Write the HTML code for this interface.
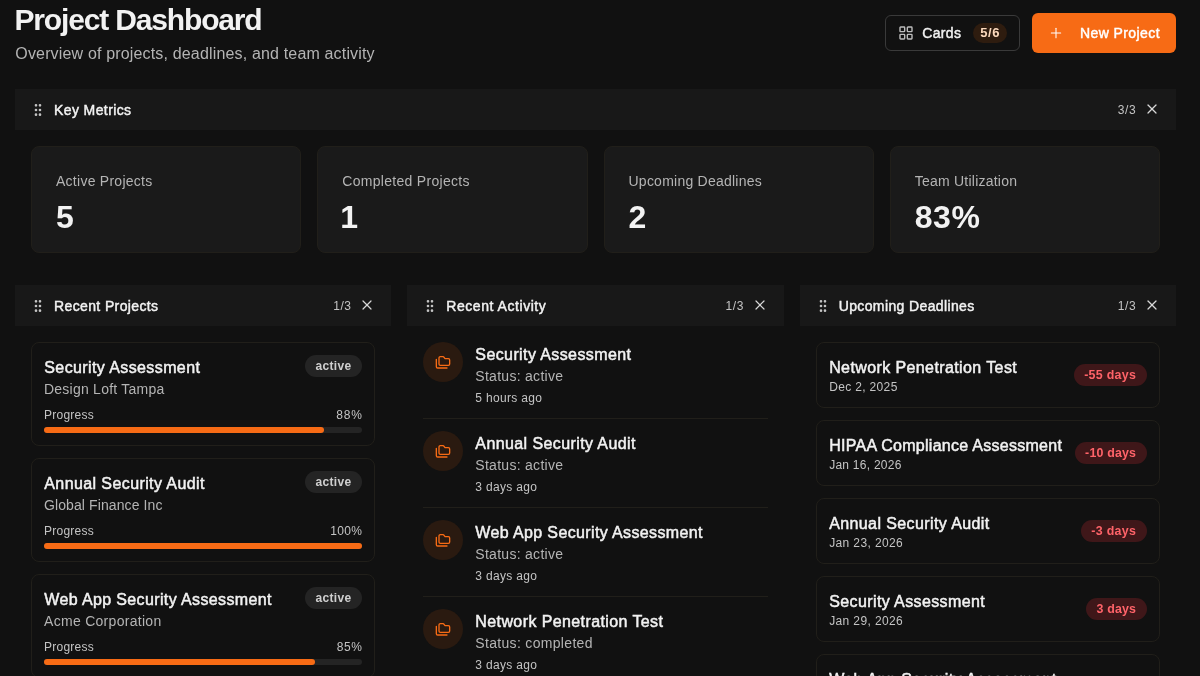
<!DOCTYPE html><html lang="en"><head><meta charset="utf-8"><title>Project Dashboard</title><style>
html,body{margin:0;padding:0}
html{width:1200px;height:676px;overflow:hidden;background:#111111}
body{background:#111111;width:1200px;height:676px;overflow:hidden;position:relative;font-family:"Liberation Sans",sans-serif;color:#f2f2f2}
.b{position:absolute;display:block}
.t{position:absolute;white-space:nowrap;margin:0}
#app{position:absolute;left:0;top:0;width:1200px;height:676px;overflow:hidden;will-change:transform}
</style></head><body><div id="app">
<div class="b" style="left:885px;top:15px;width:135px;height:36px;border:1px solid #3a3a3a;border-radius:6px;box-sizing:border-box;"></div>
<svg class="b" style="left:898px;top:25px" width="16" height="16" viewBox="0 0 24 24" fill="none" stroke="#bdbdbd" stroke-width="2.1" stroke-linecap="round" stroke-linejoin="round"><rect x="3" y="3" width="7" height="7" rx="1"/><rect x="14" y="3" width="7" height="7" rx="1"/><rect x="14" y="14" width="7" height="7" rx="1"/><rect x="3" y="14" width="7" height="7" rx="1"/></svg>
<div class="b" style="left:973px;top:23px;width:34px;height:20px;background:#2e1c0f;border-radius:10px;"></div>
<div class="b" style="left:1032px;top:13px;width:144px;height:40px;background:#f76b15;border-radius:6px;"></div>
<svg class="b" style="left:1048px;top:25px" width="16" height="16" viewBox="0 0 24 24" fill="none" stroke="#ffffff" stroke-width="1.6" stroke-linecap="round" stroke-linejoin="round"><path d="M5 12h14"/><path d="M12 5v14"/></svg>
<div class="b" style="left:15px;top:89px;width:1161px;height:41px;background:#181818;"></div>
<svg class="b" style="left:30px;top:102px" width="16" height="16" viewBox="0 0 24 24" fill="none" stroke="#c4c4c4" stroke-width="2" stroke-linecap="round" stroke-linejoin="round"><circle cx="9" cy="12" r="1"/><circle cx="9" cy="5" r="1"/><circle cx="9" cy="19" r="1"/><circle cx="15" cy="12" r="1"/><circle cx="15" cy="5" r="1"/><circle cx="15" cy="19" r="1"/></svg>
<svg class="b" style="left:1144px;top:101px" width="16" height="16" viewBox="0 0 24 24" fill="none" stroke="#d8d8d8" stroke-width="1.8" stroke-linecap="round" stroke-linejoin="round"><path d="M18 6 6 18"/><path d="m6 6 12 12"/></svg>
<div class="b" style="left:15px;top:285px;width:376.33px;height:41px;background:#181818;"></div>
<svg class="b" style="left:30px;top:298px" width="16" height="16" viewBox="0 0 24 24" fill="none" stroke="#c4c4c4" stroke-width="2" stroke-linecap="round" stroke-linejoin="round"><circle cx="9" cy="12" r="1"/><circle cx="9" cy="5" r="1"/><circle cx="9" cy="19" r="1"/><circle cx="15" cy="12" r="1"/><circle cx="15" cy="5" r="1"/><circle cx="15" cy="19" r="1"/></svg>
<svg class="b" style="left:359.33px;top:297px" width="16" height="16" viewBox="0 0 24 24" fill="none" stroke="#d8d8d8" stroke-width="1.8" stroke-linecap="round" stroke-linejoin="round"><path d="M18 6 6 18"/><path d="m6 6 12 12"/></svg>
<div class="b" style="left:407.33px;top:285px;width:376.33px;height:41px;background:#181818;"></div>
<svg class="b" style="left:422.33px;top:298px" width="16" height="16" viewBox="0 0 24 24" fill="none" stroke="#c4c4c4" stroke-width="2" stroke-linecap="round" stroke-linejoin="round"><circle cx="9" cy="12" r="1"/><circle cx="9" cy="5" r="1"/><circle cx="9" cy="19" r="1"/><circle cx="15" cy="12" r="1"/><circle cx="15" cy="5" r="1"/><circle cx="15" cy="19" r="1"/></svg>
<svg class="b" style="left:751.66px;top:297px" width="16" height="16" viewBox="0 0 24 24" fill="none" stroke="#d8d8d8" stroke-width="1.8" stroke-linecap="round" stroke-linejoin="round"><path d="M18 6 6 18"/><path d="m6 6 12 12"/></svg>
<div class="b" style="left:799.66px;top:285px;width:376.33px;height:41px;background:#181818;"></div>
<svg class="b" style="left:814.66px;top:298px" width="16" height="16" viewBox="0 0 24 24" fill="none" stroke="#c4c4c4" stroke-width="2" stroke-linecap="round" stroke-linejoin="round"><circle cx="9" cy="12" r="1"/><circle cx="9" cy="5" r="1"/><circle cx="9" cy="19" r="1"/><circle cx="15" cy="12" r="1"/><circle cx="15" cy="5" r="1"/><circle cx="15" cy="19" r="1"/></svg>
<svg class="b" style="left:1143.99px;top:297px" width="16" height="16" viewBox="0 0 24 24" fill="none" stroke="#d8d8d8" stroke-width="1.8" stroke-linecap="round" stroke-linejoin="round"><path d="M18 6 6 18"/><path d="m6 6 12 12"/></svg>
<div class="b" style="left:31.0px;top:146px;width:270.25px;height:106.5px;background:#1a1a1a;border:1px solid #211f1a;border-radius:8px;box-sizing:border-box;"></div>
<div class="b" style="left:317.25px;top:146px;width:270.25px;height:106.5px;background:#1a1a1a;border:1px solid #211f1a;border-radius:8px;box-sizing:border-box;"></div>
<div class="b" style="left:603.5px;top:146px;width:270.25px;height:106.5px;background:#1a1a1a;border:1px solid #211f1a;border-radius:8px;box-sizing:border-box;"></div>
<div class="b" style="left:889.75px;top:146px;width:270.25px;height:106.5px;background:#1a1a1a;border:1px solid #211f1a;border-radius:8px;box-sizing:border-box;"></div>
<div class="b" style="left:31px;top:342px;width:344.33px;height:104px;border:1px solid #211f1a;border-radius:8px;box-sizing:border-box;"></div>
<div class="b" style="left:305px;top:355px;width:57px;height:22px;background:#242424;border-radius:11px;"></div>
<div class="b" style="left:44px;top:427px;width:318.33px;height:6px;background:#242424;border-radius:3px;"></div>
<div class="b" style="left:44px;top:427px;width:280.13039999999995px;height:6px;background:#f76b15;border-radius:3px;"></div>
<div class="b" style="left:31px;top:458px;width:344.33px;height:104px;border:1px solid #211f1a;border-radius:8px;box-sizing:border-box;"></div>
<div class="b" style="left:305px;top:471px;width:57px;height:22px;background:#242424;border-radius:11px;"></div>
<div class="b" style="left:44px;top:543px;width:318.33px;height:6px;background:#242424;border-radius:3px;"></div>
<div class="b" style="left:44px;top:543px;width:318.33px;height:6px;background:#f76b15;border-radius:3px;"></div>
<div class="b" style="left:31px;top:574px;width:344.33px;height:104px;border:1px solid #211f1a;border-radius:8px;box-sizing:border-box;"></div>
<div class="b" style="left:305px;top:587px;width:57px;height:22px;background:#242424;border-radius:11px;"></div>
<div class="b" style="left:44px;top:659px;width:318.33px;height:6px;background:#242424;border-radius:3px;"></div>
<div class="b" style="left:44px;top:659px;width:270.5805px;height:6px;background:#f76b15;border-radius:3px;"></div>
<div class="b" style="left:423.33px;top:342px;width:40px;height:40px;background:#2a1a10;border-radius:20px;"></div>
<svg class="b" style="left:435.33px;top:354px" width="16" height="16" viewBox="0 0 24 24" fill="none" stroke="#f76b15" stroke-width="2" stroke-linecap="round" stroke-linejoin="round"><path d="M20 17a2 2 0 0 0 2-2V9a2 2 0 0 0-2-2h-3.9a2 2 0 0 1-1.69-.9l-.81-1.2a2 2 0 0 0-1.67-.9H8a2 2 0 0 0-2 2v9a2 2 0 0 0 2 2Z"/><path d="M2 8v11a2 2 0 0 0 2 2h14"/></svg>
<div class="b" style="left:423.33px;top:418px;width:344.33px;height:1px;background:#211f1a;"></div>
<div class="b" style="left:423.33px;top:431px;width:40px;height:40px;background:#2a1a10;border-radius:20px;"></div>
<svg class="b" style="left:435.33px;top:443px" width="16" height="16" viewBox="0 0 24 24" fill="none" stroke="#f76b15" stroke-width="2" stroke-linecap="round" stroke-linejoin="round"><path d="M20 17a2 2 0 0 0 2-2V9a2 2 0 0 0-2-2h-3.9a2 2 0 0 1-1.69-.9l-.81-1.2a2 2 0 0 0-1.67-.9H8a2 2 0 0 0-2 2v9a2 2 0 0 0 2 2Z"/><path d="M2 8v11a2 2 0 0 0 2 2h14"/></svg>
<div class="b" style="left:423.33px;top:507px;width:344.33px;height:1px;background:#211f1a;"></div>
<div class="b" style="left:423.33px;top:520px;width:40px;height:40px;background:#2a1a10;border-radius:20px;"></div>
<svg class="b" style="left:435.33px;top:532px" width="16" height="16" viewBox="0 0 24 24" fill="none" stroke="#f76b15" stroke-width="2" stroke-linecap="round" stroke-linejoin="round"><path d="M20 17a2 2 0 0 0 2-2V9a2 2 0 0 0-2-2h-3.9a2 2 0 0 1-1.69-.9l-.81-1.2a2 2 0 0 0-1.67-.9H8a2 2 0 0 0-2 2v9a2 2 0 0 0 2 2Z"/><path d="M2 8v11a2 2 0 0 0 2 2h14"/></svg>
<div class="b" style="left:423.33px;top:596px;width:344.33px;height:1px;background:#211f1a;"></div>
<div class="b" style="left:423.33px;top:609px;width:40px;height:40px;background:#2a1a10;border-radius:20px;"></div>
<svg class="b" style="left:435.33px;top:621px" width="16" height="16" viewBox="0 0 24 24" fill="none" stroke="#f76b15" stroke-width="2" stroke-linecap="round" stroke-linejoin="round"><path d="M20 17a2 2 0 0 0 2-2V9a2 2 0 0 0-2-2h-3.9a2 2 0 0 1-1.69-.9l-.81-1.2a2 2 0 0 0-1.67-.9H8a2 2 0 0 0-2 2v9a2 2 0 0 0 2 2Z"/><path d="M2 8v11a2 2 0 0 0 2 2h14"/></svg>
<div class="b" style="left:423.33px;top:685px;width:344.33px;height:1px;background:#211f1a;"></div>
<div class="b" style="left:815.66px;top:342px;width:344.33px;height:66px;border:1px solid #211f1a;border-radius:8px;box-sizing:border-box;"></div>
<div class="b" style="left:1073.5px;top:364.2px;width:73px;height:21.4px;background:#3f1719;border-radius:11px;"></div>
<div class="b" style="left:815.66px;top:420px;width:344.33px;height:66px;border:1px solid #211f1a;border-radius:8px;box-sizing:border-box;"></div>
<div class="b" style="left:1074.5px;top:442.2px;width:72px;height:21.4px;background:#3f1719;border-radius:11px;"></div>
<div class="b" style="left:815.66px;top:498px;width:344.33px;height:66px;border:1px solid #211f1a;border-radius:8px;box-sizing:border-box;"></div>
<div class="b" style="left:1080.5px;top:520.2px;width:66px;height:21.4px;background:#3f1719;border-radius:11px;"></div>
<div class="b" style="left:815.66px;top:576px;width:344.33px;height:66px;border:1px solid #211f1a;border-radius:8px;box-sizing:border-box;"></div>
<div class="b" style="left:1086.0px;top:598.2px;width:60.5px;height:21.4px;background:#3f1719;border-radius:11px;"></div>
<div class="b" style="left:815.66px;top:654px;width:344.33px;height:66px;border:1px solid #211f1a;border-radius:8px;box-sizing:border-box;"></div>
<div class="b" style="left:1080.5px;top:676.2px;width:66px;height:21.4px;background:#3f1719;border-radius:11px;"></div>
<div class="t" id="t0" style="top:2px;font-size:30px;line-height:36px;color:#f2f2f2;font-weight:700;letter-spacing:-1.161px;left:14.5px;">Project Dashboard</div>
<div class="t" id="t1" style="top:42.1px;font-size:16px;line-height:24px;color:#b4b4b4;letter-spacing:0.164px;left:15.3px;">Overview of projects, deadlines, and team activity</div>
<div class="t" id="t2" style="top:23px;font-size:14px;line-height:20px;color:#f2f2f2;-webkit-text-stroke:0.45px #f2f2f2;letter-spacing:0.328px;left:922.3px;">Cards</div>
<div class="t" id="t3" style="top:25px;font-size:13px;line-height:16px;color:#fbd9bd;font-weight:700;letter-spacing:0.507px;left:980.3px;">5/6</div>
<div class="t" id="t4" style="top:23px;font-size:14px;line-height:20px;color:#ffffff;-webkit-text-stroke:0.45px #ffffff;letter-spacing:0.412px;left:1080px;">New Project</div>
<div class="t" id="t5" style="top:99.5px;font-size:14px;line-height:20px;color:#f2f2f2;-webkit-text-stroke:0.45px #f2f2f2;letter-spacing:0.398px;left:54px;">Key Metrics</div>
<div class="t" id="t6" style="top:101.5px;font-size:12px;line-height:16px;color:#c4c4c4;letter-spacing:0.604px;right:63.70px;">3/3</div>
<div class="t" id="t7" style="top:295.5px;font-size:14px;line-height:20px;color:#f2f2f2;-webkit-text-stroke:0.45px #f2f2f2;letter-spacing:0.378px;left:54px;">Recent Projects</div>
<div class="t" id="t8" style="top:297.5px;font-size:12px;line-height:16px;color:#c4c4c4;letter-spacing:0.604px;right:848.37px;">1/3</div>
<div class="t" id="t9" style="top:295.5px;font-size:14px;line-height:20px;color:#f2f2f2;-webkit-text-stroke:0.45px #f2f2f2;letter-spacing:0.545px;left:446.33px;">Recent Activity</div>
<div class="t" id="t10" style="top:297.5px;font-size:12px;line-height:16px;color:#c4c4c4;letter-spacing:0.604px;right:456.04px;">1/3</div>
<div class="t" id="t11" style="top:295.5px;font-size:14px;line-height:20px;color:#f2f2f2;-webkit-text-stroke:0.45px #f2f2f2;letter-spacing:0.378px;left:838.66px;">Upcoming Deadlines</div>
<div class="t" id="t12" style="top:297.5px;font-size:12px;line-height:16px;color:#c4c4c4;letter-spacing:0.604px;right:63.71px;">1/3</div>
<div class="t" id="t13" style="top:171px;font-size:14px;line-height:20px;color:#b4b4b4;letter-spacing:0.260px;left:56.0px;">Active Projects</div>
<div class="t" id="t14" style="top:198.8px;font-size:32px;line-height:36px;color:#f2f2f2;font-weight:700;left:55.9px;">5</div>
<div class="t" id="t15" style="top:171px;font-size:14px;line-height:20px;color:#b4b4b4;letter-spacing:0.296px;left:342.25px;">Completed Projects</div>
<div class="t" id="t16" style="top:198.8px;font-size:32px;line-height:36px;color:#f2f2f2;font-weight:700;left:340.15px;">1</div>
<div class="t" id="t17" style="top:171px;font-size:14px;line-height:20px;color:#b4b4b4;letter-spacing:0.240px;left:628.5px;">Upcoming Deadlines</div>
<div class="t" id="t18" style="top:198.8px;font-size:32px;line-height:36px;color:#f2f2f2;font-weight:700;left:628.4px;">2</div>
<div class="t" id="t19" style="top:171px;font-size:14px;line-height:20px;color:#b4b4b4;letter-spacing:0.229px;left:914.75px;">Team Utilization</div>
<div class="t" id="t20" style="top:198.8px;font-size:32px;line-height:36px;color:#f2f2f2;font-weight:700;letter-spacing:0.651px;left:914.65px;">83%</div>
<div class="t" id="t21" style="top:356px;font-size:16px;line-height:24px;color:#f2f2f2;-webkit-text-stroke:0.5px #f2f2f2;letter-spacing:0.395px;left:44.3px;">Security Assessment</div>
<div class="t" id="t22" style="top:379px;font-size:14px;line-height:20px;color:#b4b4b4;letter-spacing:0.236px;left:44px;">Design Loft Tampa</div>
<div class="t" id="t23" style="top:358px;font-size:12px;line-height:16px;color:#cfcfcf;font-weight:700;letter-spacing:0.328px;left:315.5px;">active</div>
<div class="t" id="t24" style="top:407px;font-size:12px;line-height:16px;color:#c4c4c4;letter-spacing:0.246px;left:44px;">Progress</div>
<div class="t" id="t25" style="top:407px;font-size:12px;line-height:16px;color:#c4c4c4;letter-spacing:0.823px;right:837.18px;">88%</div>
<div class="t" id="t26" style="top:472px;font-size:16px;line-height:24px;color:#f2f2f2;-webkit-text-stroke:0.5px #f2f2f2;letter-spacing:0.400px;left:44.3px;">Annual Security Audit</div>
<div class="t" id="t27" style="top:495px;font-size:14px;line-height:20px;color:#b4b4b4;letter-spacing:0.098px;left:44px;">Global Finance Inc</div>
<div class="t" id="t28" style="top:474px;font-size:12px;line-height:16px;color:#cfcfcf;font-weight:700;letter-spacing:0.328px;left:315.5px;">active</div>
<div class="t" id="t29" style="top:523px;font-size:12px;line-height:16px;color:#c4c4c4;letter-spacing:0.246px;left:44px;">Progress</div>
<div class="t" id="t30" style="top:523px;font-size:12px;line-height:16px;color:#c4c4c4;letter-spacing:0.324px;right:837.68px;">100%</div>
<div class="t" id="t31" style="top:588px;font-size:16px;line-height:24px;color:#f2f2f2;-webkit-text-stroke:0.5px #f2f2f2;letter-spacing:0.367px;left:44.3px;">Web App Security Assessment</div>
<div class="t" id="t32" style="top:611px;font-size:14px;line-height:20px;color:#b4b4b4;letter-spacing:0.292px;left:44px;">Acme Corporation</div>
<div class="t" id="t33" style="top:590px;font-size:12px;line-height:16px;color:#cfcfcf;font-weight:700;letter-spacing:0.328px;left:315.5px;">active</div>
<div class="t" id="t34" style="top:639px;font-size:12px;line-height:16px;color:#c4c4c4;letter-spacing:0.246px;left:44px;">Progress</div>
<div class="t" id="t35" style="top:639px;font-size:12px;line-height:16px;color:#c4c4c4;letter-spacing:0.656px;right:837.34px;">85%</div>
<div class="t" id="t36" style="top:343px;font-size:16px;line-height:24px;color:#f2f2f2;-webkit-text-stroke:0.5px #f2f2f2;letter-spacing:0.395px;left:475.33px;">Security Assessment</div>
<div class="t" id="t37" style="top:366px;font-size:14px;line-height:20px;color:#b4b4b4;letter-spacing:0.282px;left:475.33px;">Status: active</div>
<div class="t" id="t38" style="top:390px;font-size:12px;line-height:16px;color:#c4c4c4;letter-spacing:0.328px;left:475.33px;">5 hours ago</div>
<div class="t" id="t39" style="top:432px;font-size:16px;line-height:24px;color:#f2f2f2;-webkit-text-stroke:0.5px #f2f2f2;letter-spacing:0.400px;left:475.33px;">Annual Security Audit</div>
<div class="t" id="t40" style="top:455px;font-size:14px;line-height:20px;color:#b4b4b4;letter-spacing:0.282px;left:475.33px;">Status: active</div>
<div class="t" id="t41" style="top:479px;font-size:12px;line-height:16px;color:#c4c4c4;letter-spacing:0.328px;left:475.33px;">3 days ago</div>
<div class="t" id="t42" style="top:521px;font-size:16px;line-height:24px;color:#f2f2f2;-webkit-text-stroke:0.5px #f2f2f2;letter-spacing:0.367px;left:475.33px;">Web App Security Assessment</div>
<div class="t" id="t43" style="top:544px;font-size:14px;line-height:20px;color:#b4b4b4;letter-spacing:0.282px;left:475.33px;">Status: active</div>
<div class="t" id="t44" style="top:568px;font-size:12px;line-height:16px;color:#c4c4c4;letter-spacing:0.328px;left:475.33px;">3 days ago</div>
<div class="t" id="t45" style="top:610px;font-size:16px;line-height:24px;color:#f2f2f2;-webkit-text-stroke:0.5px #f2f2f2;letter-spacing:0.397px;left:475.33px;">Network Penetration Test</div>
<div class="t" id="t46" style="top:633px;font-size:14px;line-height:20px;color:#b4b4b4;letter-spacing:0.320px;left:475.33px;">Status: completed</div>
<div class="t" id="t47" style="top:657px;font-size:12px;line-height:16px;color:#c4c4c4;letter-spacing:0.328px;left:475.33px;">3 days ago</div>
<div class="t" id="t48" style="top:356px;font-size:16px;line-height:24px;color:#f2f2f2;-webkit-text-stroke:0.5px #f2f2f2;letter-spacing:0.397px;left:829.16px;">Network Penetration Test</div>
<div class="t" id="t49" style="top:379px;font-size:12px;line-height:16px;color:#c4c4c4;letter-spacing:0.344px;left:829.16px;">Dec 2, 2025</div>
<div class="t" id="t50" style="top:367px;font-size:12.4px;line-height:16px;color:#ff6369;font-weight:700;letter-spacing:0.301px;right:63.80px;">-55 days</div>
<div class="t" id="t51" style="top:434px;font-size:16px;line-height:24px;color:#f2f2f2;-webkit-text-stroke:0.5px #f2f2f2;letter-spacing:0.275px;left:829.16px;">HIPAA Compliance Assessment</div>
<div class="t" id="t52" style="top:457px;font-size:12px;line-height:16px;color:#c4c4c4;letter-spacing:0.258px;left:829.16px;">Jan 16, 2026</div>
<div class="t" id="t53" style="top:445px;font-size:12.4px;line-height:16px;color:#ff6369;font-weight:700;letter-spacing:0.176px;right:63.92px;">-10 days</div>
<div class="t" id="t54" style="top:512px;font-size:16px;line-height:24px;color:#f2f2f2;-webkit-text-stroke:0.5px #f2f2f2;letter-spacing:0.400px;left:829.16px;">Annual Security Audit</div>
<div class="t" id="t55" style="top:535px;font-size:12px;line-height:16px;color:#c4c4c4;letter-spacing:0.383px;left:829.16px;">Jan 23, 2026</div>
<div class="t" id="t56" style="top:523px;font-size:12.4px;line-height:16px;color:#ff6369;font-weight:700;letter-spacing:0.328px;right:63.77px;">-3 days</div>
<div class="t" id="t57" style="top:590px;font-size:16px;line-height:24px;color:#f2f2f2;-webkit-text-stroke:0.5px #f2f2f2;letter-spacing:0.395px;left:829.16px;">Security Assessment</div>
<div class="t" id="t58" style="top:613px;font-size:12px;line-height:16px;color:#c4c4c4;letter-spacing:0.383px;left:829.16px;">Jan 29, 2026</div>
<div class="t" id="t59" style="top:601px;font-size:12.4px;line-height:16px;color:#ff6369;font-weight:700;letter-spacing:0.154px;right:63.95px;">3 days</div>
<div class="t" id="t60" style="top:668px;font-size:16px;line-height:24px;color:#f2f2f2;-webkit-text-stroke:0.5px #f2f2f2;letter-spacing:0.367px;left:829.16px;">Web App Security Assessment</div>
<div class="t" id="t61" style="top:691px;font-size:12px;line-height:16px;color:#c4c4c4;letter-spacing:0.358px;left:829.16px;">Feb 5, 2026</div>
<div class="t" id="t62" style="top:679px;font-size:12.4px;line-height:16px;color:#ff6369;font-weight:700;letter-spacing:-0.067px;right:64.17px;">10 days</div>
</div></body></html>
